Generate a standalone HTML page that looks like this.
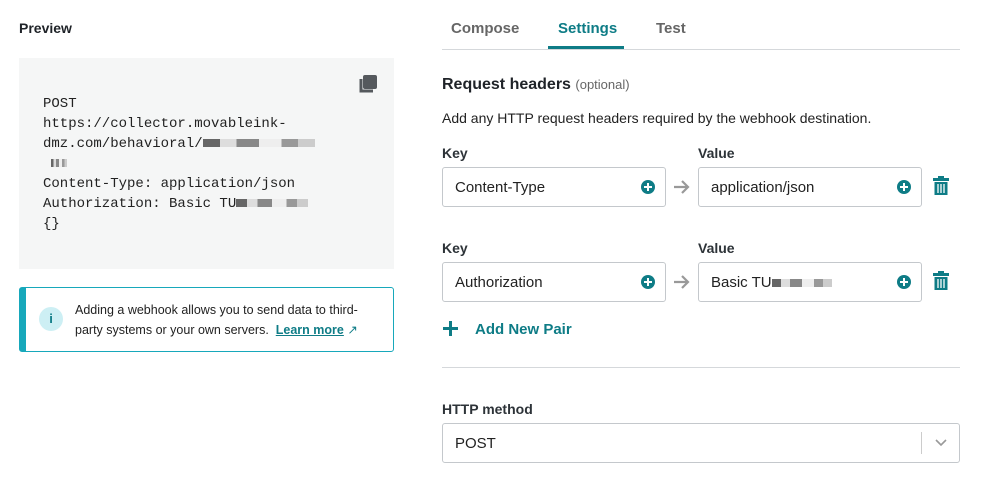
<!DOCTYPE html>
<html><head><style>
*{box-sizing:border-box;margin:0;padding:0}
body{width:984px;height:492px;background:#fff;font-family:"Liberation Sans",sans-serif;color:#1f2328;position:relative;overflow:hidden}
.a{position:absolute}
.lbl{font-weight:bold;font-size:14px;color:#2d3338}
.inp{position:absolute;border:1px solid #c4c8cc;border-radius:3px;height:40px;font-size:15px;padding:0 12px;line-height:40px;color:#222}
.plus{position:absolute;right:10px;top:12px;width:14px;height:14px;border-radius:50%;background:#0e7c86}
.plus:before{content:"";position:absolute;left:3px;top:6px;width:8px;height:2px;background:#fff}
.plus:after{content:"";position:absolute;left:6px;top:3px;width:2px;height:8px;background:#fff}
.code{font-family:"Liberation Mono",monospace;font-size:14px;line-height:20px;color:#222;white-space:pre}
.blur{display:inline-block;height:8px;background:linear-gradient(90deg,#666 0 15%,#ddd 15% 30%,#888 30% 50%,#eee 50% 70%,#999 70% 85%,#ccc 85%)}
</style></head><body>
<div class="a" style="left:19px;top:20px;font-weight:bold;font-size:14px">Preview</div>
<div class="a" style="left:19px;top:58px;width:375px;height:211px;background:#f5f6f6"></div>
<svg class="a" style="left:358px;top:74px" width="20" height="20" viewBox="0 0 20 20"><rect x="5" y="1" width="14" height="14" rx="2" fill="#55595d"/><path d="M3 5v12h12" fill="none" stroke="#55595d" stroke-width="3"/></svg>
<div class="a code" style="left:43px;top:94px">POST
https://collector.movableink-
dmz.com/behavioral/<span class="blur" style="width:112px"></span>
 <span class="blur" style="width:16px"></span>
Content-Type: application/json
Authorization: Basic TU<span class="blur" style="width:72px"></span>
{}</div>
<div class="a" style="left:19px;top:287px;width:375px;height:65px;border:1px solid #17a8bb;border-left:7px solid #17a8bb;border-radius:3px"></div>
<div class="a" style="left:39px;top:307px;width:24px;height:24px;border-radius:50%;background:#cdeff4;color:#0e7c86;font-weight:bold;font-size:13px;text-align:center;line-height:24px">i</div>
<div class="a" style="left:75px;top:300px;font-size:12.5px;line-height:20px;color:#222;width:310px">Adding a webhook allows you to send data to third-party systems or your own servers. &nbsp;<span style="color:#0e7c86;font-weight:bold;text-decoration:underline">Learn more</span> <span style="color:#0e7c86">↗</span></div>

<div class="a" style="left:451px;top:20px;font-size:15px;font-weight:bold;color:#666">Compose</div>
<div class="a" style="left:558px;top:20px;font-size:15px;font-weight:bold;color:#0e7c86">Settings</div>
<div class="a" style="left:656px;top:20px;font-size:15px;font-weight:bold;color:#666">Test</div>
<div class="a" style="left:442px;top:49px;width:518px;height:1px;background:#d5d8db"></div>
<div class="a" style="left:548px;top:46px;width:76px;height:3px;background:#0e7c86"></div>

<div class="a" style="left:442px;top:76px;font-size:16px;font-weight:bold">Request headers <span style="font-weight:normal;font-size:13px;color:#666">(optional)</span></div>
<div class="a" style="left:442px;top:110px;font-size:14px;color:#222">Add any HTTP request headers required by the webhook destination.</div>

<div class="a lbl" style="left:442px;top:145px">Key</div>
<div class="a lbl" style="left:698px;top:145px">Value</div>
<div class="inp" style="left:442px;top:167px;width:224px">Content-Type<div class="plus"></div></div>
<svg class="a" style="left:673px;top:179px" width="17" height="16" viewBox="0 0 17 16"><path d="M1 8h14M9 2l6 6-6 6" fill="none" stroke="#999" stroke-width="2.2"/></svg>
<div class="inp" style="left:698px;top:167px;width:224px">application/json<div class="plus"></div></div>
<svg class="a" style="left:932px;top:176px" width="18" height="20" viewBox="0 0 18 20"><rect x="1" y="2" width="16" height="3" fill="#0e7c86"/><rect x="6" y="0" width="6" height="3" fill="#0e7c86"/><path d="M2.5 6h13v13h-13z" fill="#0e7c86"/><path d="M6 8v9M9 8v9M12 8v9" stroke="#fff" stroke-width="1.3"/></svg>

<div class="a lbl" style="left:442px;top:240px">Key</div>
<div class="a lbl" style="left:698px;top:240px">Value</div>
<div class="inp" style="left:442px;top:262px;width:224px">Authorization<div class="plus"></div></div>
<svg class="a" style="left:673px;top:274px" width="17" height="16" viewBox="0 0 17 16"><path d="M1 8h14M9 2l6 6-6 6" fill="none" stroke="#999" stroke-width="2.2"/></svg>
<div class="inp" style="left:698px;top:262px;width:224px">Basic TU<span class="blur" style="width:60px;vertical-align:middle"></span><div class="plus"></div></div>
<svg class="a" style="left:932px;top:271px" width="18" height="20" viewBox="0 0 18 20"><rect x="1" y="2" width="16" height="3" fill="#0e7c86"/><rect x="6" y="0" width="6" height="3" fill="#0e7c86"/><path d="M2.5 6h13v13h-13z" fill="#0e7c86"/><path d="M6 8v9M9 8v9M12 8v9" stroke="#fff" stroke-width="1.3"/></svg>

<div class="a" style="left:443px;top:321px;width:15px;height:15px"><div class="a" style="left:0;top:6px;width:15px;height:3px;background:#0e7c86"></div><div class="a" style="left:6px;top:0;width:3px;height:15px;background:#0e7c86"></div></div>
<div class="a" style="left:475px;top:321px;font-size:15px;font-weight:bold;color:#0e7c86">Add New Pair</div>
<div class="a" style="left:442px;top:367px;width:518px;height:1px;background:#d5d8db"></div>

<div class="a lbl" style="left:442px;top:401px">HTTP method</div>
<div class="inp" style="left:442px;top:423px;width:518px;height:40px">POST
<div class="a" style="right:37px;top:8px;width:1px;height:22px;background:#ccc"></div>
<svg class="a" style="right:12px;top:15px" width="12" height="8" viewBox="0 0 12 8"><path d="M1 1l5 5 5-5" fill="none" stroke="#999" stroke-width="1.6"/></svg></div>
</body></html>
